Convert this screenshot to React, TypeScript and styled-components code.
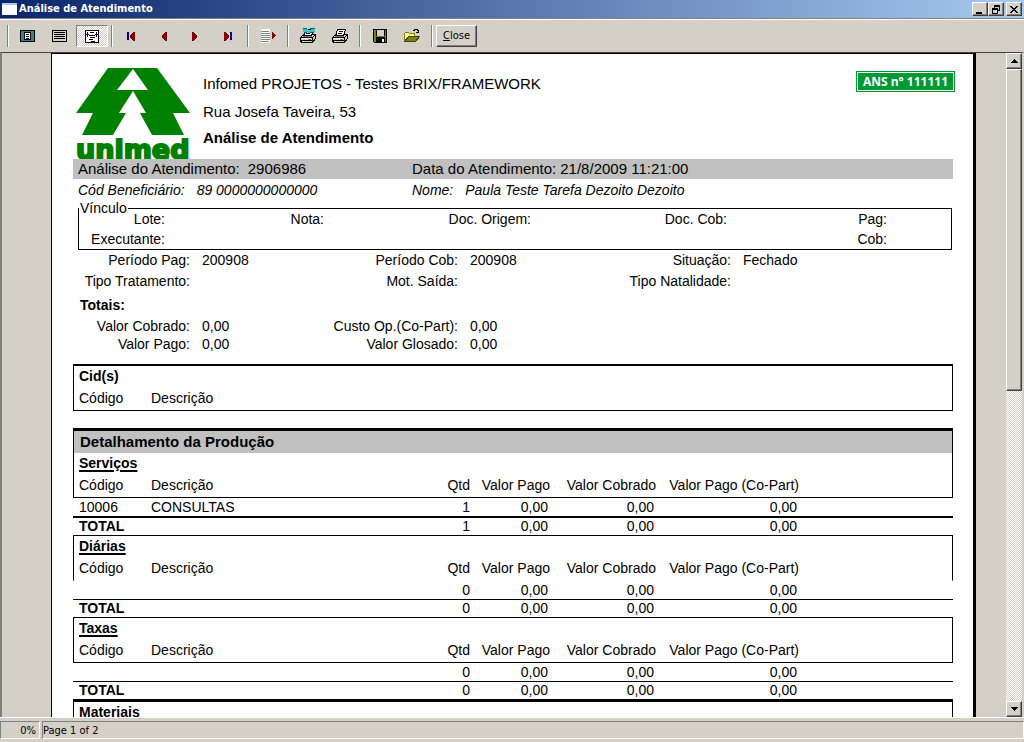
import React from 'react';
import styled, { createGlobalStyle, css } from 'styled-components';

const face = '#d4d0c8';
const uiFont = '"DejaVu Sans Condensed", Tahoma, sans-serif';
const reportFont = '"Liberation Sans", Arial, sans-serif';

const GlobalStyle = createGlobalStyle`
  *, *::before, *::after { box-sizing: border-box; }
  html, body { margin: 0; padding: 0; }
  body { background: ${face}; color: #000; font-family: ${uiFont}; font-size: 11px; }
  button { font: inherit; color: inherit; padding: 0; margin: 0; border: 0; background: none; }
  svg { display: block; }
`;

const raised = css`
  background: ${face};
  border: 1px solid;
  border-color: #fff #404040 #404040 #fff;
  box-shadow: inset -1px -1px 0 #808080;
`;

const checker = css`
  background: repeating-conic-gradient(#fff 0 25%, ${face} 0 50%) 0 0 / 2px 2px;
`;

const Window = styled.div`
  display: flex;
  flex-direction: column;
  height: 100vh;
  min-height: 300px;
  overflow: hidden;
`;

/* ---------- title bar ---------- */

const TitleBar = styled.header`
  display: flex;
  align-items: center;
  flex: none;
  height: 18px;
  padding: 0 2px;
  background: linear-gradient(to right, #0a246a, #a6caf0);
  color: #fff;
`;

const AppIcon = styled.span`
  width: 15px;
  height: 12px;
  margin-right: 2px;
  background: #fff;
  border-top: 2px solid #a6caf0;
`;

const Title = styled.h1`
  flex: 1;
  margin: 0;
  font-size: 11px;
  line-height: 18px;
  font-weight: bold;
`;

const WindowButton = styled.button<{ $apart?: boolean }>`
  ${raised}
  display: grid;
  place-items: center;
  width: 16px;
  height: 14px;
  margin-left: ${(p) => (p.$apart ? 2 : 0)}px;
`;

/* ---------- toolbar ---------- */

const Toolbar = styled.div`
  display: flex;
  align-items: center;
  flex: none;
  height: 34px;
  padding: 0 4px;
  border-top: 1px solid #808080;
  box-shadow: inset 0 1px 0 #fff;
`;

const Separator = styled.span`
  width: 2px;
  height: 22px;
  margin: 0 3px;
  border-left: 1px solid #808080;
  border-right: 1px solid #fff;
`;

const ToolButton = styled.button<{ $pressed?: boolean }>`
  display: grid;
  place-items: center;
  width: 32px;
  height: 22px;
  ${(p) =>
    p.$pressed &&
    css`
      ${checker}
      border: 1px solid;
      border-color: #808080 #fff #fff #808080;
    `}
`;

const CloseButton = styled.button`
  ${raised}
  width: 41px;
  height: 22px;
  line-height: 20px;
`;

/* ---------- preview area ---------- */

const Preview = styled.main`
  display: flex;
  flex: 1;
  min-height: 0;
  border-top: 1px solid #404040;
  border-left: 2px solid #808080;
  border-right: 2px solid ${face};
`;

const Scroller = styled.div`
  flex: 1;
  min-width: 0;
  overflow: hidden;
  padding: 0 30px 0 49px;
`;

const Paper = styled.article`
  min-height: 100%;
  padding: 0 20px 0 21px;
  background: #fff;
  border: 1px solid #000;
  border-right-width: 3px;
  border-bottom: 0;
  font-family: ${reportFont};
  font-size: 14px;
`;

const ReportHeader = styled.div`
  display: flex;
  align-items: flex-start;
  height: 105px;
  margin-right: -2px;
  padding-left: 2px;
`;

const LogoSlot = styled.div`
  padding-top: 13px;
`;

const Organization = styled.div`
  flex: 1;
  padding: 16px 0 0 12px;
  font-size: 15px;
  line-height: 28px;
`;

const ReportTitle = styled.h2`
  margin: 0;
  font-size: 15px;
  line-height: 24px;
`;

const AnsBadge = styled.div`
  margin-top: 17px;
  padding: 1px;
  background: #009933;
  color: #fff;
  font-family: "Open Sans", sans-serif;
  font-size: 12px;
  font-weight: bold;
  line-height: 17px;

  span {
    display: block;
    padding: 0 5px;
    border: 1px solid #fff;
  }
`;

const Band = styled.div<{ $italic?: boolean }>`
  display: grid;
  grid-template-columns: 334px 1fr;
  padding-left: 5px;
  line-height: 20px;
  ${(p) => (p.$italic ? 'font-style: italic; line-height: 22px;' : 'background: #c0c0c0; font-size: 15px;')}
`;

const Pair = styled.div<{ $gap: number }>`
  display: flex;
  gap: ${(p) => p.$gap}px;
`;

const LinkBox = styled.fieldset`
  position: relative;
  display: grid;
  grid-template-columns: 86px 159px 207px 196px 160px;
  min-width: 0;
  margin: 7px 1px 0 5px;
  padding: 0;
  border: 1px solid #000;
  line-height: 20px;
  text-align: right;
`;

const LinkLegend = styled.legend`
  position: absolute;
  top: -10px;
  left: 0;
  padding: 0 1px;
  background: #fff;
  line-height: 18px;
`;

const FieldGrid = styled.div<{ $line: number }>`
  display: grid;
  grid-template-columns: 117px 90px 154px 110px 139px 1fr;
  column-gap: 12px;
  line-height: ${(p) => p.$line}px;
`;

const Label = styled.span`
  text-align: right;
`;

const Heading = styled.h3`
  margin: 0;
  padding: 1px 0 0 7px;
  font-size: 14px;
  line-height: 24px;
`;

const DetailHeading = styled.h3`
  margin: 17px 0 0;
  padding-left: 6px;
  background: #c0c0c0;
  border: 1px solid #000;
  border-top-width: 3px;
  border-bottom: 0;
  font-size: 15px;
  line-height: 22px;
`;

const Table = styled.table<{ $top: number; $bottom: number; $rule: number }>`
  width: 100%;
  table-layout: fixed;
  border-collapse: separate;
  border-spacing: 0;
  font-size: 14px;

  th, td { padding: 0; font-weight: normal; text-align: right; white-space: nowrap; }
  th:first-child, td:first-child { padding-left: 6px; text-align: left; }
  th:nth-child(2), td:nth-child(2) { text-align: left; }

  thead tr:first-child th {
    border: solid #000;
    border-width: ${(p) => p.$top}px 1px 0;
    padding-left: 5px;
    font-weight: bold;
    line-height: 20px;
  }
  thead tr:nth-child(2) th {
    border-bottom: 1px solid ${(p) => (p.$bottom ? '#000' : 'transparent')};
    line-height: 24px;
  }
  thead tr:nth-child(2) th:first-child { border-left: 1px solid #000; padding-left: 5px; }
  thead tr:nth-child(2) th:last-child { border-right: 1px solid #000; }

  tbody td { line-height: 18px; }
  tbody td:nth-child(n + 4), tfoot td:nth-child(n + 4) { padding-right: 2px; }
  tfoot th, tfoot td { border-top: ${(p) => p.$rule}px solid #000; line-height: 17px; }
  tfoot th:first-child { font-weight: bold; }
`;

const CidTable = styled(Table)`
  margin-top: 11px;
`;

const SectionName = styled.span`
  text-decoration: underline;
  text-decoration-thickness: 2px;
  text-underline-offset: 2px;
`;

/* ---------- scroll bar ---------- */

const ScrollBar = styled.div`
  ${checker}
  display: flex;
  flex-direction: column;
  flex: none;
  width: 16px;
`;

const ScrollButton = styled.button`
  ${raised}
  display: grid;
  place-items: center;
  flex: none;
  width: 16px;
  height: 16px;
`;

const Track = styled.div`
  flex: 1;
`;

const Thumb = styled.div`
  ${raised}
  height: 51%;
`;

/* ---------- status bar ---------- */

const StatusBar = styled.footer`
  display: flex;
  gap: 2px;
  flex: none;
  height: 25px;
  padding: 3px 0 3px;
  border-top: 1px solid #fff;
`;

const StatusPanel = styled.div<{ $grow?: boolean }>`
  border: 1px solid;
  border-color: #808080 #fff #fff #808080;
  line-height: 17px;
  ${(p) => (p.$grow ? 'flex: 1;' : 'width: 40px; padding-right: 3px; text-align: right;')}
`;

/* ---------- drawings ---------- */

const Glyph = ({ size = 16, children }: { size?: number; children: React.ReactNode }) => (
  <svg width={size} height={size} viewBox={`0 0 ${size} ${size}`} shapeRendering="crispEdges" aria-hidden="true">
    {children}
  </svg>
);

const WholePageIcon = () => (
  <Glyph>
    <rect x="0.5" y="2.5" width="14" height="11" rx="1" fill="#408080" stroke="#000" />
    <rect x="4.5" y="4.5" width="6" height="7" fill="#fff" stroke="#000" />
    <path d="M6 6.5h3M6 8.5h3M6 10.5h3" stroke="#000080" />
  </Glyph>
);

const FullSizeIcon = () => (
  <Glyph>
    <rect x="0.5" y="2.5" width="14" height="11" rx="1" fill={face} stroke="#000" />
    <path d="M2 4.5h11M2 6.5h11M2 8.5h11M2 10.5h11" stroke="#000" />
  </Glyph>
);

const PageWidthIcon = () => (
  <Glyph>
    <rect x="1.5" y="2.5" width="13" height="12" rx="1" fill="#fff" stroke="#000" />
    <path d="M6 4.5h4M5 7.5h6M6 9.5h5M5 11.5h4M7 13.5h4" stroke="#000" />
    <path d="M1 6h2v-2h1v2h1v1h-1v2h-1v-2h-2zM15 6h-2v-2h-1v2h-1v1h1v2h1v-2h2z" fill="#000080" />
  </Glyph>
);

const NavIcon = ({ dir, edge }: { dir: 'left' | 'right'; edge?: boolean }) => (
  <Glyph>
    <g transform={dir === 'right' ? 'matrix(-1 0 0 1 15 0)' : undefined}>
      {edge && <path d="M3 4h2v8h-2z" fill="#000080" />}
      <path d="M6 7h1v-1h1v-1h1v-1h2v9h-2v-1h-1v-1h-1v-1h-1z" fill="#800000" />
    </g>
  </Glyph>
);

const GoToIcon = () => (
  <Glyph>
    <rect x="1" y="1" width="9" height="14" fill="#fff" />
    <path d="M1 3.5h8M1 5.5h9M1 7.5h9M1 9.5h9M1 11.5h9M1 13.5h8" stroke="#808080" />
    <path d="M12 4h1v1h1v1h1v1h1v1h-1v1h-1v1h-1v1h-1z" fill="#800000" />
  </Glyph>
);

const PrinterIcon = ({ setup }: { setup?: boolean }) => (
  <Glyph>
    <path d="M5.5 1.5h8l-2 6h-8z" fill="#fff" stroke="#000" />
    <path d="M7 3.5h4M6 5.5h4" stroke="#000" />
    <path d="M0.5 9.5l3-3h1M12 6.5h3.5v4l-3 4h-10l-2-1v-4h12l3-3" fill={face} stroke="#000" />
    <path d="M12.5 10v4M1 12.5h11" fill="none" stroke="#000" />
    <path d="M2 10.5h9" stroke="#fff" />
    <path d="M8 11.5h3" stroke="#808000" />
    <path d="M3 8.5h9" stroke="#808080" />
    {setup && (
      <>
        <path d="M3 1h4l1 1h2l1-1h4v3h-4l-1 1h-2l-1-1h-4z" fill="#40c0c0" />
        <path d="M3 0.5h4M10 0.5h5M4 4.5h3M10 4.5h4" stroke="#006060" />
      </>
    )}
  </Glyph>
);

const SaveIcon = () => (
  <Glyph>
    <path d="M1.500 1.5h13v13h-12l-1-1z" fill="#808000" stroke="#000" />
    <rect x="4" y="2" width="8" height="6" fill={face} />
    <rect x="4" y="9" width="9" height="6" fill="#000" />
    <rect x="10" y="11" width="2" height="3" fill="#fff" />
    <path d="M4 2v6M12 2v6" stroke="#000" />
  </Glyph>
);

const OpenIcon = () => (
  <Glyph>
    <path d="M0.5 13.5v-8l1-1h3l1 1h5v3" fill="#ffff99" stroke="#808000" />
    <path d="M0.5 13.5l4-5h11l-4 5z" fill="#808000" stroke="#404000" />
    <path d="M9 2.5h1v-1h3v1h1v2M12 4.5h3" fill="none" stroke="#000" />
  </Glyph>
);

const ArrowIcon = ({ down }: { down?: boolean }) => (
  <svg width="7" height="4" viewBox="0 0 7 4" shapeRendering="crispEdges" aria-hidden="true">
    <path d={down ? 'M0 0h7v1h-1v1h-1v1h-1v1h-1v-1h-1v-1h-1v-1h-1z' : 'M3 0h1v1h1v1h1v1h1v1h-7v-1h1v-1h1v-1h1z'} />
  </svg>
);

const Logo = () => (
  <svg width="116" height="92" viewBox="0 0 116 92" role="img" aria-label="unimed">
    <g transform="translate(0 1)">
      <path d="M33 0H82L115 45H98L109 67H77L65 45H71L58 23L44 45H51L38 67H7L18 45H1Z" fill="#008000" />
      <path d="M58 1L73 22H42Z" fill="#fff" />
    </g>
    <text
      x="1"
      y="92"
      fill="#008000"
      stroke="#008000"
      strokeWidth="2"
      fontFamily='"DejaVu Sans", sans-serif'
      fontWeight="bold"
      fontSize="27"
    >
      unimed
    </text>
  </svg>
);

/* ---------- report ---------- */

type Amounts = [string, string, string, string];

interface SectionProps {
  name: string;
  code?: string;
  description?: string;
  amounts?: Amounts;
  top?: number;
  bottom?: number;
  rule?: number;
}

const Col = styled.col<{ $width?: number }>`
  width: ${(p) => (p.$width ? `${p.$width}px` : 'auto')};
`;

const Columns = () => (
  <colgroup>
    <Col $width={78} />
    <Col $width={252} />
    <Col $width={67} />
    <Col $width={80} />
    <Col $width={106} />
    <Col $width={143} />
    <Col />
  </colgroup>
);

const Section = ({ name, code, description, amounts, top = 1, bottom = 1, rule = 1 }: SectionProps) => (
  <Table $top={top} $bottom={bottom} $rule={rule}>
    <Columns />
    <thead>
      <tr>
        <th colSpan={7}>
          <SectionName>{name}</SectionName>
        </th>
      </tr>
      {amounts && (
        <tr>
          <th>Código</th>
          <th>Descrição</th>
          <th>Qtd</th>
          <th>Valor Pago</th>
          <th>Valor Cobrado</th>
          <th>Valor Pago (Co-Part)</th>
          <th />
        </tr>
      )}
    </thead>
    {amounts && (
      <>
        <tbody>
          <tr>
            <td>{code}</td>
            <td>{description}</td>
            {amounts.map((a, i) => (
              <td key={i}>{a}</td>
            ))}
            <td />
          </tr>
        </tbody>
        <tfoot>
          <tr>
            <th>TOTAL</th>
            <td />
            {amounts.map((a, i) => (
              <td key={i}>{a}</td>
            ))}
            <td />
          </tr>
        </tfoot>
      </>
    )}
  </Table>
);

const Report = () => (
  <Paper>
    <ReportHeader>
      <LogoSlot>
        <Logo />
      </LogoSlot>
      <Organization>
        <div>Infomed PROJETOS - Testes BRIX/FRAMEWORK</div>
        <div>Rua Josefa Taveira, 53</div>
        <ReportTitle>Análise de Atendimento</ReportTitle>
      </Organization>
      <AnsBadge>
        <span>ANS n° 111111</span>
      </AnsBadge>
    </ReportHeader>

    <Band>
      <Pair $gap={8}>
        <span>Análise do Atendimento:</span>
        <span>2906986</span>
      </Pair>
      <Pair $gap={4}>
        <span>Data do Atendimento:</span>
        <span>21/8/2009 11:21:00</span>
      </Pair>
    </Band>
    <Band $italic>
      <Pair $gap={12}>
        <span>Cód Beneficiário:</span>
        <span>89 0000000000000</span>
      </Pair>
      <Pair $gap={12}>
        <span>Nome:</span>
        <span>Paula Teste Tarefa Dezoito Dezoito</span>
      </Pair>
    </Band>

    <LinkBox>
      <LinkLegend>Vínculo</LinkLegend>
      <span>Lote:</span>
      <span>Nota:</span>
      <span>Doc. Origem:</span>
      <span>Doc. Cob:</span>
      <span>Pag:</span>
      <span>Executante:</span>
      <span />
      <span />
      <span />
      <span>Cob:</span>
    </LinkBox>

    <FieldGrid $line={21}>
      <Label>Período Pag:</Label>
      <span>200908</span>
      <Label>Período Cob:</Label>
      <span>200908</span>
      <Label>Situação:</Label>
      <span>Fechado</span>
      <Label>Tipo Tratamento:</Label>
      <span />
      <Label>Mot. Saída:</Label>
      <span />
      <Label>Tipo Natalidade:</Label>
      <span />
    </FieldGrid>

    <Heading>Totais:</Heading>
    <FieldGrid $line={18}>
      <Label>Valor Cobrado:</Label>
      <span>0,00</span>
      <Label>Custo Op.(Co-Part):</Label>
      <span>0,00</span>
      <span />
      <span />
      <Label>Valor Pago:</Label>
      <span>0,00</span>
      <Label>Valor Glosado:</Label>
      <span>0,00</span>
    </FieldGrid>

    <CidTable $top={2} $bottom={1} $rule={1}>
      <Columns />
      <thead>
        <tr>
          <th colSpan={7}>Cid(s)</th>
        </tr>
        <tr>
          <th>Código</th>
          <th>Descrição</th>
          <th colSpan={5} />
        </tr>
      </thead>
    </CidTable>

    <DetailHeading>Detalhamento da Produção</DetailHeading>
    <Section
      name="Serviços"
      code="10006"
      description="CONSULTAS"
      amounts={['1', '0,00', '0,00', '0,00']}
      top={0}
      rule={2}
    />
    <Section name="Diárias" amounts={['0', '0,00', '0,00', '0,00']} bottom={0} />
    <Section name="Taxas" amounts={['0', '0,00', '0,00', '0,00']} />
    <Section name="Materiais" top={3} />
  </Paper>
);

export default function App() {
  return (
    <Window>
      <GlobalStyle />
      <TitleBar>
        <AppIcon />
        <Title>Análise de Atendimento</Title>
        <WindowButton aria-label="Minimize">
          <svg width="10" height="9" viewBox="0 0 10 9" shapeRendering="crispEdges">
            <path d="M1 7h6v2h-6z" />
          </svg>
        </WindowButton>
        <WindowButton aria-label="Restore">
          <svg width="10" height="9" viewBox="0 0 10 9" shapeRendering="crispEdges">
            <path d="M3 0h6v6h-2v-1h1v-3h-4v1h-1zM1 3h6v6h-6zM2 5v3h4v-3z" fillRule="evenodd" />
          </svg>
        </WindowButton>
        <WindowButton aria-label="Close window" $apart>
          <svg width="10" height="9" viewBox="0 0 10 9" shapeRendering="crispEdges">
            <path d="M1 1h2v1h1v1h2v-1h1v-1h2v1h-1v1h-1v1h-1v1h1v1h1v1h1v1h-2v-1h-1v-1h-2v1h-1v1h-2v-1h1v-1h1v-1h1v-1h-1v-1h-1v-1h-1z" />
          </svg>
        </WindowButton>
      </TitleBar>

      <Toolbar>
        <Separator />
        <ToolButton aria-label="Whole page">
          <WholePageIcon />
        </ToolButton>
        <ToolButton aria-label="Full size">
          <FullSizeIcon />
        </ToolButton>
        <ToolButton aria-label="Page width" aria-pressed="true" $pressed>
          <PageWidthIcon />
        </ToolButton>
        <Separator />
        <ToolButton aria-label="First page">
          <NavIcon dir="left" edge />
        </ToolButton>
        <ToolButton aria-label="Previous page">
          <NavIcon dir="left" />
        </ToolButton>
        <ToolButton aria-label="Next page">
          <NavIcon dir="right" />
        </ToolButton>
        <ToolButton aria-label="Last page">
          <NavIcon dir="right" edge />
        </ToolButton>
        <Separator />
        <ToolButton aria-label="Go to page">
          <GoToIcon />
        </ToolButton>
        <Separator />
        <ToolButton aria-label="Printer setup">
          <PrinterIcon setup />
        </ToolButton>
        <ToolButton aria-label="Print">
          <PrinterIcon />
        </ToolButton>
        <Separator />
        <ToolButton aria-label="Save">
          <SaveIcon />
        </ToolButton>
        <ToolButton aria-label="Open">
          <OpenIcon />
        </ToolButton>
        <Separator />
        <CloseButton>
          <u>C</u>lose
        </CloseButton>
      </Toolbar>

      <Preview>
        <Scroller>
          <Report />
        </Scroller>
        <ScrollBar>
          <ScrollButton aria-label="Scroll up">
            <ArrowIcon />
          </ScrollButton>
          <Track>
            <Thumb />
          </Track>
          <ScrollButton aria-label="Scroll down">
            <ArrowIcon down />
          </ScrollButton>
        </ScrollBar>
      </Preview>

      <StatusBar>
        <StatusPanel>0%</StatusPanel>
        <StatusPanel $grow>Page 1 of 2</StatusPanel>
      </StatusBar>
    </Window>
  );
}
